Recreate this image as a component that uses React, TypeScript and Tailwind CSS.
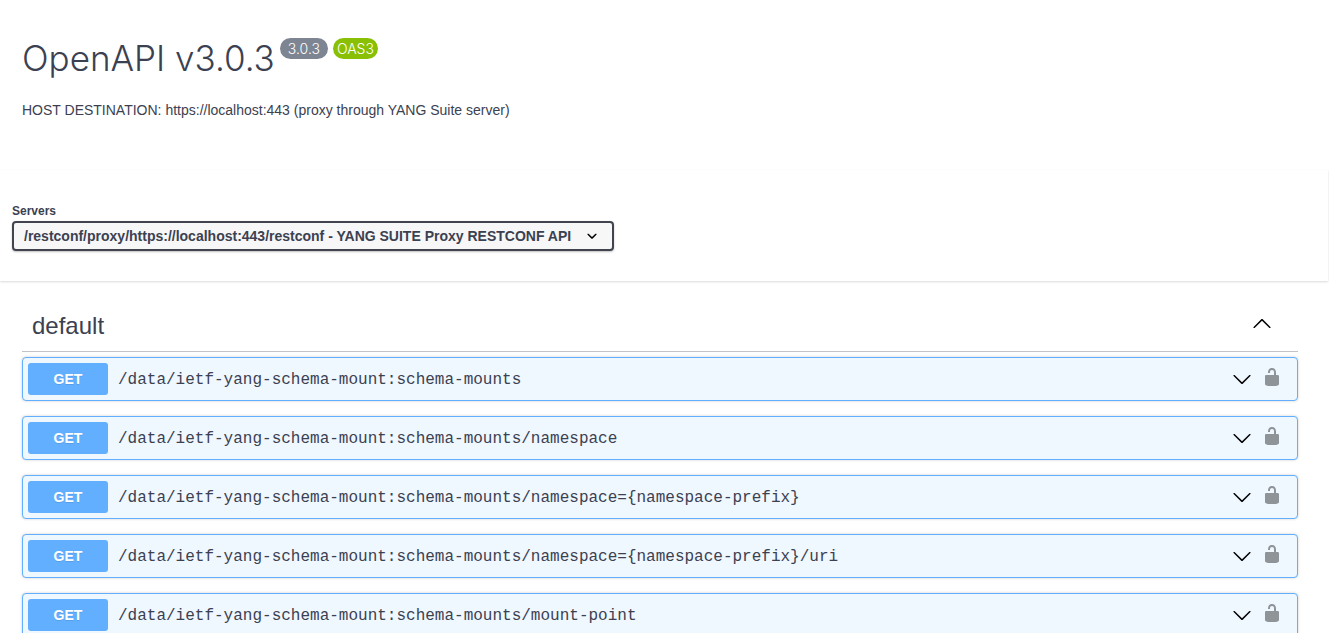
const paths = [
  '/data/ietf-yang-schema-mount:schema-mounts',
  '/data/ietf-yang-schema-mount:schema-mounts/namespace',
  '/data/ietf-yang-schema-mount:schema-mounts/namespace={namespace-prefix}',
  '/data/ietf-yang-schema-mount:schema-mounts/namespace={namespace-prefix}/uri',
  '/data/ietf-yang-schema-mount:schema-mounts/mount-point',
];

function ArrowDown() {
  return (
    <svg viewBox="0 0 20 20" className="size-5" aria-hidden="true">
      <path d="M17.418 6.109c.272-.268.709-.268.979 0s.271.701 0 .969l-7.908 7.83c-.27.268-.707.268-.979 0l-7.908-7.83c-.27-.268-.27-.701 0-.969.271-.268.709-.268.979 0L10 13.25l7.418-7.141z" />
    </svg>
  );
}

function ArrowUp() {
  return (
    <svg viewBox="0 0 20 20" className="mb-1.5 size-5" aria-hidden="true">
      <path d="M17.418 14.908c.272.268.709.268.979 0s.271-.701 0-.969l-7.908-7.83c-.27-.268-.707-.268-.979 0l-7.908 7.83c-.27.268-.27.701 0 .969.271.268.709.268.979 0L10 7.767l7.418 7.141z" />
    </svg>
  );
}

function Unlocked() {
  return (
    <svg viewBox="0 0 20 20" className="size-5 fill-[#8f9499]" aria-hidden="true">
      <path d="M15.8 8H14V5.6C14 2.703 12.665 1 10 1 7.334 1 6 2.703 6 5.6V6h2v-.801C8 3.754 8.797 3 10 3c1.203 0 2 .754 2 1.999V8H4c-.553 0-1 .646-1 1.199V17c0 .549.428 1.139.951 1.307l1.197.387C5.672 18.861 6.55 19 7.1 19h5.8c.549 0 1.428-.139 1.951-.307l1.196-.387c.524-.167.953-.757.953-1.306V9.199C17 8.646 16.352 8 15.8 8z" />
    </svg>
  );
}

function Operation({ path }: { path: string }) {
  return (
    <li className="flex items-center rounded border border-[#61affe] bg-[#eff7ff] p-[5px] shadow-[0_0_3px_rgba(0,0,0,0.19)]">
      <button type="button" className="flex min-w-0 flex-1 items-center text-left">
        <span className="w-20 shrink-0 rounded-[3px] bg-[#61affe] py-1.5 text-center text-sm font-bold text-white [text-shadow:0_1px_0_rgba(0,0,0,0.1)]">
          GET
        </span>
        <span className="min-w-0 flex-1 truncate pt-0.5 pl-2.5 font-['Courier_New','Liberation_Mono',monospace] text-base">
          {path}
        </span>
        <ArrowDown />
      </button>
      <button type="button" aria-label="Authorize" className="mr-2.5 mb-1 ml-2.5">
        <Unlocked />
      </button>
    </li>
  );
}

export default function App() {
  return (
    <div className="h-screen overflow-hidden bg-white pb-1.5 font-['Liberation_Sans',Arial,sans-serif] text-[#3b4151]">
      <main className="h-full overflow-hidden">
        <header className="h-[170px] px-[22px] pt-[38px]">
          <div className="flex items-start gap-[5px]">
            <h1 className="font-['Inter',sans-serif] text-[35px] leading-10 font-light">OpenAPI v3.0.3</h1>
            <span className="rounded-full bg-[#7d8492] px-2 font-['Inter',sans-serif] text-sm leading-[21px] font-light text-white">
              3.0.3
            </span>
            <span className="rounded-full bg-[#89bf04] px-1 font-['Inter',sans-serif] text-sm leading-[21px] font-light text-white">
              OAS3
            </span>
          </div>
          <p className="mt-[22px] text-sm">HOST DESTINATION: https://localhost:443 (proxy through YANG Suite server)</p>
        </header>

        <section className="mr-px bg-white px-3 pt-[33px] pb-[30px] shadow-[0_1px_2px_rgba(0,0,0,0.15)]">
          <label htmlFor="servers" className="block pb-0.5 text-xs font-bold">
            Servers
          </label>
          <div className="grid w-[602px] max-w-full items-center">
            <select
              id="servers"
              className="col-start-1 row-start-1 h-[30px] appearance-none rounded border-2 border-[#41444e] bg-[#f7f7f7] pr-10 pl-2.5 text-sm font-bold shadow-[0_1px_2px_rgba(0,0,0,0.25)]"
            >
              <option>/restconf/proxy/https://localhost:443/restconf - YANG SUITE Proxy RESTCONF API</option>
            </select>
            <svg
              viewBox="0 0 20 20"
              className="pointer-events-none col-start-1 row-start-1 mr-3 size-5 justify-self-end"
              aria-hidden="true"
            >
              <path d="M13.418 7.859c.271-.268.709-.268.978 0 .27.268.272.701 0 .969l-3.908 3.83c-.27.268-.707.268-.979 0l-3.908-3.83c-.27-.267-.27-.701 0-.969.271-.268.709-.268.978 0L10 11l3.418-3.141z" />
            </svg>
          </div>
        </section>

        <section className="pt-[22px] pr-[31px] pl-[22px]">
          <h2 className="border-b border-[#c1c3c8] text-2xl">
            <button type="button" className="flex w-full items-center justify-between pt-[7px] pr-[26px] pb-[9px] pl-2.5">
              default
              <ArrowUp />
            </button>
          </h2>
          <ul className="flex flex-col gap-[15px] pt-[5px]">
            {paths.map((path) => (
              <Operation key={path} path={path} />
            ))}
          </ul>
        </section>
      </main>
    </div>
  );
}
